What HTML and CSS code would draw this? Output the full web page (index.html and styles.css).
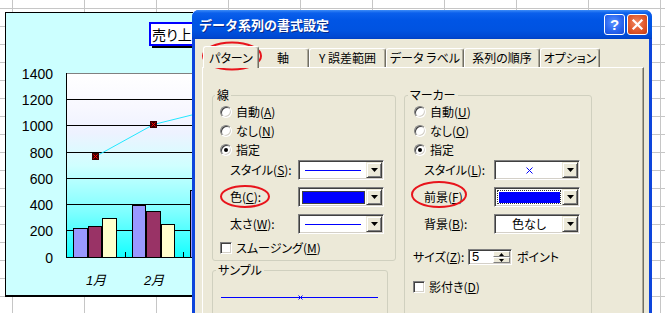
FILE: index.html
```html
<!DOCTYPE html>
<html lang="ja">
<head>
<meta charset="utf-8">
<title>データ系列の書式設定</title>
<link rel="stylesheet" href="styles.css">
</head>
<body>
<div class="sheet">
  <svg class="chart" width="193" height="313" viewBox="0 0 193 313">
    <defs>
      <linearGradient id="plotfill" x1="0" y1="0" x2="0" y2="1">
        <stop offset="0" stop-color="#ffffff"/>
        <stop offset="0.18" stop-color="#f8f8ff"/>
        <stop offset="0.32" stop-color="#eef2ff"/>
        <stop offset="0.5" stop-color="#d0ffff"/>
        <stop offset="0.75" stop-color="#80ffff"/>
        <stop offset="1" stop-color="#14ffff"/>
      </linearGradient>
    </defs>
    <rect x="5.5" y="12.5" width="250" height="283" fill="#ccffff" stroke="#000"/>
    <line x1="5" y1="296.5" x2="256" y2="296.5" stroke="#000"/>
    <rect x="152" y="25" width="100" height="23" fill="#000"/>
    <rect x="150" y="23" width="100" height="22" fill="#fff" stroke="#0000ff" stroke-width="2"/>
    <text class="ctitle" x="152" y="40">売り上</text>
    <rect x="66.5" y="73.5" width="200" height="184" fill="url(#plotfill)"/>
    <line x1="66" y1="73.5" x2="260" y2="73.5" stroke="#808080"/>
    <g stroke="#000">
      <line x1="66" y1="99.5" x2="260" y2="99.5"/>
      <line x1="66" y1="125.5" x2="260" y2="125.5"/>
      <line x1="66" y1="152.5" x2="260" y2="152.5"/>
      <line x1="66" y1="178.5" x2="260" y2="178.5"/>
      <line x1="66" y1="204.5" x2="260" y2="204.5"/>
      <line x1="66" y1="230.5" x2="260" y2="230.5"/>
      <line x1="66.5" y1="73" x2="66.5" y2="258"/>
      <line x1="125.5" y1="252" x2="125.5" y2="258"/>
      <line x1="183.5" y1="252" x2="183.5" y2="258"/>
    </g>
    <g stroke="#000">
      <rect x="73.5" y="228.5" width="14" height="29" fill="#9999ff"/>
      <rect x="88.5" y="226.5" width="13" height="31" fill="#993366"/>
      <rect x="102.5" y="218.5" width="14" height="39" fill="#ffffcc"/>
      <rect x="132.5" y="205.5" width="13" height="52" fill="#9999ff"/>
      <rect x="146.5" y="211.5" width="14" height="46" fill="#993366"/>
      <rect x="161.5" y="224.5" width="13" height="33" fill="#ffffcc"/>
      <rect x="190.5" y="190.5" width="14" height="67" fill="#9999ff"/>
    </g>
    <line x1="66" y1="257.5" x2="260" y2="257.5" stroke="#000"/>
    <polyline points="95.5,156.5 153.5,124.5 212,110" fill="none" stroke="#22e8ff" stroke-width="1"/>
    <rect x="92" y="153" width="7" height="7" fill="#3a0000"/>
    <path d="M93.5 154.5 L97.5 158.5 M97.5 154.5 L93.5 158.5" stroke="#ff0000" stroke-width="1"/>
    <rect x="150" y="121" width="7" height="7" fill="#3a0000"/>
    <path d="M151.5 122.5 L155.5 126.5 M155.5 122.5 L151.5 126.5" stroke="#ff0000" stroke-width="1"/>
    <text class="ylab" x="53" y="78.5">1400</text>
    <text class="ylab" x="53" y="104.5">1200</text>
    <text class="ylab" x="53" y="131">1000</text>
    <text class="ylab" x="53" y="157.5">800</text>
    <text class="ylab" x="53" y="183.5">600</text>
    <text class="ylab" x="53" y="209.5">400</text>
    <text class="ylab" x="53" y="236">200</text>
    <text class="ylab" x="53" y="262.5">0</text>
    <text class="xlab" x="96" y="285">1月</text>
    <text class="xlab" x="154" y="285">2月</text>
  </svg>

  <div class="dialog">
    <div class="titlebar">
      <span class="title">データ系列の書式設定</span>
      <span class="tb-btn help">?</span>
      <span class="tb-btn close"><svg width="19" height="19" viewBox="0 0 19 19"><path d="M5.5 5.5 L13.5 13.5 M13.5 5.5 L5.5 13.5" stroke="#fff" stroke-width="2.2" stroke-linecap="square"/></svg></span>
    </div>
    <div class="dlg-body">
      <div class="tabs">
        <div class="tab active t1">パターン</div>
        <div class="tab t2">軸</div>
        <div class="tab t3">Y 誤差範囲</div>
        <div class="tab t4">データ ラベル</div>
        <div class="tab t5">系列の順序</div>
        <div class="tab t6">オプション</div>
      </div>
      <div class="panel">
        <div class="col-left">
          <div class="group g-line">
            <div class="group-title">線</div>
            <div class="opt"><span class="radio"></span><span>自動(<u>A</u>)</span></div>
            <div class="opt"><span class="radio"></span><span>なし(<u>N</u>)</span></div>
            <div class="opt"><span class="radio on"></span><span>指定</span></div>
            <div class="field first">
              <span class="flabel">スタイル(<u>S</u>):</span>
              <div class="combo"><span class="combo-val"><span class="line-sample"></span></span><span class="combo-btn"><svg width="7" height="4" viewBox="0 0 7 4"><polygon points="0,0 7,0 3.5,4"/></svg></span></div>
            </div>
            <div class="field">
              <span class="flabel">色(<u>C</u>):</span>
              <div class="combo"><span class="combo-val"><span class="swatch"></span></span><span class="combo-btn"><svg width="7" height="4" viewBox="0 0 7 4"><polygon points="0,0 7,0 3.5,4"/></svg></span></div>
            </div>
            <div class="field">
              <span class="flabel">太さ(<u>W</u>):</span>
              <div class="combo"><span class="combo-val"><span class="line-sample"></span></span><span class="combo-btn"><svg width="7" height="4" viewBox="0 0 7 4"><polygon points="0,0 7,0 3.5,4"/></svg></span></div>
            </div>
            <div class="chk-row smooth"><span class="check"></span><span>スムージング(<u>M</u>)</span></div>
          </div>
          <div class="group g-sample">
            <div class="group-title">サンプル</div>
            <svg class="sample-line" width="158" height="7" viewBox="0 0 158 7"><line x1="0" y1="3.5" x2="157" y2="3.5" stroke="#0000ff"/><path d="M77.5 1.5 L81.5 5.5 M81.5 1.5 L77.5 5.5" stroke="#0000ff"/></svg>
          </div>
        </div>
        <div class="group g-marker">
          <div class="group-title">マーカー</div>
          <div class="opt"><span class="radio"></span><span>自動(<u>U</u>)</span></div>
          <div class="opt"><span class="radio"></span><span>なし(<u>O</u>)</span></div>
          <div class="opt"><span class="radio on"></span><span>指定</span></div>
          <div class="field first">
            <span class="flabel">スタイル(<u>L</u>):</span>
            <div class="combo"><span class="combo-val"><svg width="7" height="7" viewBox="0 0 7 7"><path d="M0.5 0.5 L6.5 6.5 M6.5 0.5 L0.5 6.5" stroke="#0000ff"/></svg></span><span class="combo-btn"><svg width="7" height="4" viewBox="0 0 7 4"><polygon points="0,0 7,0 3.5,4"/></svg></span></div>
          </div>
          <div class="field">
            <span class="flabel">前景(<u>F</u>)</span>
            <div class="combo"><span class="combo-val focus"><span class="swatch fg"></span></span><span class="combo-btn"><svg width="7" height="4" viewBox="0 0 7 4"><polygon points="0,0 7,0 3.5,4"/></svg></span></div>
          </div>
          <div class="field">
            <span class="flabel">背景(<u>B</u>):</span>
            <div class="combo"><span class="combo-val">色なし</span><span class="combo-btn"><svg width="7" height="4" viewBox="0 0 7 4"><polygon points="0,0 7,0 3.5,4"/></svg></span></div>
          </div>
          <div class="size-row">
            <span class="slabel">サイズ(<u>Z</u>):</span>
            <div class="spin"><span class="spin-val">5</span><span class="spin-btns"><span class="spin-b"><svg width="5" height="3" viewBox="0 0 5 3"><polygon points="2.5,0 5,3 0,3"/></svg></span><span class="spin-b"><svg width="5" height="3" viewBox="0 0 5 3"><polygon points="0,0 5,0 2.5,3"/></svg></span></span></div>
            <span class="unit">ポイント</span>
          </div>
          <div class="chk-row shadow"><span class="check"></span><span>影付き(<u>D</u>)</span></div>
        </div>
      </div>
    </div>
  </div>

  <svg class="marks" width="665" height="313" viewBox="0 0 665 313">
    <g fill="none" stroke="#e8141c" stroke-width="2">
      <ellipse cx="232" cy="56" rx="29" ry="13.5"/>
      <ellipse cx="245" cy="196.5" rx="24" ry="10.5"/>
      <ellipse cx="439" cy="194.5" rx="27" ry="12.5"/>
    </g>
  </svg>
</div>
</body>
</html>
```
FILE: styles.css
```css
* { box-sizing: border-box; }
html, body { margin: 0; padding: 0; }
body {
  width: 665px;
  height: 313px;
  overflow: hidden;
  background: #fff;
  font-family: "Noto Sans CJK JP", sans-serif;
}
.sheet {
  position: relative;
  width: 665px;
  height: 313px;
  overflow: hidden;
  background-color: #fff;
  background-image:
    linear-gradient(to right, #c6c6c6 1px, transparent 1px),
    linear-gradient(to bottom, #c6c6c6 1px, transparent 1px);
  background-size: 72px 100%, 100% 18px;
  background-position: 12px 0, 0 8px;
}

/* chart object */
.chart { position: absolute; left: 0; top: 0; }
.chart .ylab { font: 14px "Liberation Sans", Arial, sans-serif; text-anchor: end; fill: #000; }
.chart .xlab { font: italic 13px "Liberation Sans", "Noto Sans CJK JP", sans-serif; text-anchor: middle; fill: #000; }
.chart .ctitle { font: 14px "Noto Sans CJK JP", sans-serif; font-feature-settings: "palt"; fill: #000; }

/* dialog window */
.dialog {
  position: absolute;
  left: 192px;
  top: 10px;
  width: 460px;
  height: 320px;
  background: #0d45dc;
  border-radius: 7px 7px 0 0;
  padding: 0 3px;
  display: flex;
  flex-direction: column;
}
.titlebar {
  flex: none;
  height: 29px;
  margin: 0 -3px;
  border-radius: 7px 7px 0 0;
  background: linear-gradient(to bottom, #3d8cf7 0px, #0b60ec 3px, #0055e5 10px, #0053e1 20px, #0048d2 27px, #003fc2 29px);
  display: flex;
  align-items: center;
  padding: 0 4px 0 7px;
}
.title {
  flex: 1;
  color: #fff;
  font-weight: bold;
  font-size: 13px;
  line-height: 16px;
  text-shadow: 1px 1px 0 #0a2a8a;
}
.tb-btn {
  width: 21px;
  height: 21px;
  border: 1px solid #fff;
  border-radius: 3px;
  margin-left: 2px;
  display: flex;
  align-items: center;
  justify-content: center;
}
.help {
  background: radial-gradient(circle at 45% 40%, #5b93ff 0%, #2a66f0 55%, #1849d6 100%);
  color: #fff;
  font: bold 15px/1 "Liberation Sans", Arial, sans-serif;
}
.close {
  background: radial-gradient(circle at 45% 40%, #f08a64 0%, #e0582c 55%, #c23c14 100%);
}
.close svg { display: block; }

.dlg-body {
  flex: 1;
  background: #ece9d8;
  font-size: 12px;
  line-height: 14px;
  font-feature-settings: "palt";
  color: #000;
}
.dlg-body u { text-decoration-thickness: 1px; text-underline-offset: 1px; }

/* tabs */
.tabs {
  display: flex;
  align-items: flex-end;
  height: 29px;
  padding-left: 10px;
}
.tab {
  height: 19px;
  margin-bottom: 1px;
  display: flex;
  align-items: center;
  justify-content: center;
  background: #ece9d8;
  border: 1px solid #fff;
  border-bottom: none;
  border-right-color: #716f64;
  box-shadow: inset -1px 0 0 #aca899;
  border-radius: 3px 3px 0 0;
  white-space: nowrap;
}
.tab.active {
  position: relative;
  z-index: 2;
  height: 22px;
  margin: 0 -2px 0 -2px;
}
.t1 { width: 56px; }
.t2 { width: 52px; }
.t3 { width: 77px; }
.t4 { width: 78px; }
.t5 { width: 76px; }
.t6 { width: 60px; }

/* panel */
.panel {
  margin: -1px 5px 0 7px;
  height: 260px;
  border: 1px solid #fff;
  border-right-color: #716f64;
  border-bottom-color: #716f64;
  box-shadow: inset -1px -1px 0 #aca899;
  padding: 27px 0 0 9px;
  display: flex;
  align-items: flex-start;
  gap: 8px;
}
.col-left { display: flex; flex-direction: column; align-items: flex-start; }

.group {
  border: 1px solid #d0d0bf;
  border-radius: 3px;
}
.group-title {
  margin: -8px 0 0 3px;
  padding: 0 2px;
  height: 14px;
  width: max-content;
  background: #ece9d8;
}
.g-line { width: 184px; height: 166px; padding-left: 7px; }
.g-line .group-title { margin-left: -5px; }
.g-sample { width: 176px; height: 60px; margin-top: 9px; }
.g-marker { width: 188px; height: 240px; padding-left: 8px; }
.g-marker .group-title { margin-left: -5px; }

.sample-line { display: block; margin: 17px 0 0 8px; }

/* radios & checks */
.opt {
  height: 19px;
  display: flex;
  align-items: center;
  gap: 4px;
}
.g-marker .opt { padding-left: 1px; }
.radio, .check {
  position: relative;
  flex: none;
  width: 12px;
  height: 12px;
  background: #fff;
  border: 1px solid;
  border-color: #808080 #fff #fff #808080;
  box-shadow: inset 1px 1px 0 #404040, inset -1px -1px 0 #d4d0c8;
}
.radio { border-radius: 50%; }
.radio.on::after {
  content: "";
  position: absolute;
  left: 3px;
  top: 3px;
  width: 4px;
  height: 4px;
  border-radius: 50%;
  background: #000;
}
.chk-row {
  height: 16px;
  display: flex;
  align-items: center;
  gap: 4px;
}
.smooth { margin-top: 6px; }
.shadow { margin-top: 14px; }

/* label + combo rows */
.field {
  height: 20px;
  margin-top: 7px;
  display: flex;
  align-items: center;
}
.field.first { margin-top: 1px; }
.flabel { white-space: nowrap; }
.g-line .flabel { width: 68px; margin-left: 10px; }
.g-marker .flabel { width: 70px; margin-left: 11px; }

.combo {
  width: 86px;
  height: 20px;
  display: flex;
  align-items: center;
  padding: 1px;
  background: #fff;
  border: 1px solid;
  border-color: #808080 #fff #fff #808080;
  box-shadow: inset 1px 1px 0 #404040, inset -1px -1px 0 #d4d0c8;
}
.combo-val {
  flex: 1;
  height: 16px;
  display: flex;
  align-items: center;
  justify-content: center;
}
.combo-val.focus { outline: 1px dotted #333; outline-offset: -2px; }
.combo-btn {
  width: 16px;
  height: 16px;
  display: flex;
  align-items: center;
  justify-content: center;
  background: #ece9d8;
  border: 1px solid;
  border-color: #ece9d8 #404040 #404040 #ece9d8;
  box-shadow: inset 1px 1px 0 #fff, inset -1px -1px 0 #808080;
}
.combo-btn svg { display: block; }
.line-sample { width: 56px; height: 1px; background: #0000ff; }
.swatch {
  width: 63px;
  height: 13px;
  background: #0000ff;
  border: 1px solid #404040;
}
.swatch.fg { width: 61px; height: 11px; border: none; }

/* size row */
.size-row {
  height: 16px;
  margin-top: 15px;
  display: flex;
  align-items: center;
}
.slabel { width: 55px; white-space: nowrap; }
.spin {
  width: 44px;
  height: 16px;
  display: flex;
  padding: 1px;
  background: #fff;
  border: 1px solid;
  border-color: #808080 #fff #fff #808080;
  box-shadow: inset 1px 1px 0 #404040, inset -1px -1px 0 #d4d0c8;
}
.spin-val {
  flex: 1;
  padding-left: 2px;
  font: 13px/12px "Liberation Sans", Arial, sans-serif;
}
.spin-btns { width: 17px; display: flex; flex-direction: column; }
.spin-b {
  flex: 1;
  display: flex;
  align-items: center;
  justify-content: center;
  background: #ece9d8;
  border: 1px solid;
  border-color: #fff #808080 #808080 #fff;
}
.spin-b svg { display: block; }
.unit { margin-left: 5px; }

/* annotation marks */
.marks { position: absolute; left: 0; top: 0; pointer-events: none; }
```
